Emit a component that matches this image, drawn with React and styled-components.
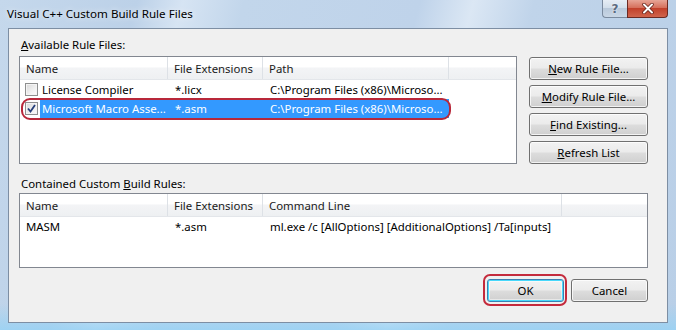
import React from 'react';
import styled, { createGlobalStyle } from 'styled-components';

const GlobalStyle = createGlobalStyle`
  html, body { margin: 0; padding: 0; }
  body {
    width: 676px;
    height: 330px;
    overflow: hidden;
    font-family: "Noto Sans", "DejaVu Sans", sans-serif;
    font-size: 11.4px;
    color: #000;
  }
`;

const rules = [
  { name: 'License Compiler', ext: '*.licx', path: 'C:\\Program Files (x86)\\Microso...', checked: false },
  { name: 'Microsoft Macro Asse...', ext: '*.asm', path: 'C:\\Program Files (x86)\\Microso...', checked: true, selected: true },
];

const sideButtons = [
  { key: 'N', rest: 'ew Rule File...' },
  { key: 'M', rest: 'odify Rule File...' },
  { key: 'F', rest: 'ind Existing...' },
  { key: 'R', rest: 'efresh List' },
];

function CheckBox({ checked }) {
  return (
    <Check>
      {checked && (
        <svg width="11" height="11" viewBox="0 0 11 11">
          <path d="M2 5.5 L4.5 8.5 L9 2" fill="none" stroke="#27407a" strokeWidth="1.8" />
        </svg>
      )}
    </Check>
  );
}

export default function App() {
  return (
    <Window>
      <GlobalStyle />
      <TitleBar>
        <Title>Visual C++ Custom Build Rule Files</Title>
        <Caption>
          <HelpButton>?</HelpButton>
          <CloseButton>
            <svg width="14" height="11" viewBox="0 0 14 11">
              <path d="M3 1.5 L11 9.5 M11 1.5 L3 9.5" stroke="#5a1a12" strokeWidth="3.4" strokeLinecap="round" />
              <path d="M3 1.5 L11 9.5 M11 1.5 L3 9.5" stroke="#fff" strokeWidth="2" strokeLinecap="round" />
            </svg>
          </CloseButton>
        </Caption>
      </TitleBar>

      <Client>
        <GroupLabel $gap={4}><u>A</u>vailable Rule Files:</GroupLabel>
        <TopSection>
          <ListView $height={108} $width={498}>
            <HeaderRow>
              <HeadCell $w={148}>Name</HeadCell>
              <HeadCell $w={95}>File Extensions</HeadCell>
              <HeadCell $w={186}>Path</HeadCell>
              <HeadFill />
            </HeaderRow>
            {rules.map((r) => (
              <Row key={r.name}>
                <NameCell $w={148}>
                  <CheckBox checked={r.checked} />
                  <NameText $selected={r.selected}>{r.name}</NameText>
                </NameCell>
                <Cell $w={95} $selected={r.selected}>{r.ext}</Cell>
                <Cell $w={186} $selected={r.selected}>{r.path}</Cell>
                {r.selected && <RowMark />}
              </Row>
            ))}
          </ListView>
          <ButtonColumn>
            {sideButtons.map((b) => (
              <Button key={b.key}><u>{b.key}</u>{b.rest}</Button>
            ))}
          </ButtonColumn>
        </TopSection>

        <GroupLabel $top={12} $gap={2}>Contained Custom <u>B</u>uild Rules:</GroupLabel>
        <ListView $height={75}>
          <HeaderRow>
            <HeadCell $w={148}>Name</HeadCell>
            <HeadCell $w={95}>File Extensions</HeadCell>
            <HeadCell $w={299}>Command Line</HeadCell>
            <HeadFill />
          </HeaderRow>
          <Row>
            <Cell $w={148} $pad={6}>MASM</Cell>
            <Cell $w={95}>*.asm</Cell>
            <Cell $w={380}>ml.exe /c [AllOptions] [AdditionalOptions] /Ta[inputs]</Cell>
          </Row>
        </ListView>

        <Footer>
          <DefaultButton>
            OK
            <Ring />
          </DefaultButton>
          <Button $w={77}>Cancel</Button>
        </Footer>
      </Client>
    </Window>
  );
}

const Window = styled.div`
  width: 676px;
  height: 330px;
  box-sizing: border-box;
  display: flex;
  flex-direction: column;
  background:
    linear-gradient(to bottom, rgba(255,255,255,0) 0%, rgba(255,255,255,0) 92%, rgba(150,210,245,0.8) 100%),
    linear-gradient(105deg, #c5d8ec 0%, #bcd1e8 18%, #d6e4f3 24%, #c2d6eb 32%, #bfd3ea 55%, #dbe7f4 62%, #c0d4ea 70%, #b9cfe7 100%);
`;

const TitleBar = styled.div`
  height: 28px;
  display: flex;
  align-items: flex-start;
  flex-shrink: 0;
`;

const Title = styled.div`
  padding: 6px 0 0 7px;
  line-height: 16px;
  font-size: 11.6px;
  color: #000;
  text-shadow: 0 0 6px rgba(255,255,255,0.9);
`;

const Caption = styled.div`
  margin-left: auto;
  margin-right: 8px;
  display: flex;
`;

const HelpButton = styled.div`
  width: 25px;
  height: 18px;
  box-sizing: border-box;
  border: 1px solid #7a8a9e;
  border-top: none;
  border-right: none;
  border-bottom-left-radius: 4px;
  background: linear-gradient(to bottom, #e6edf5 0%, #d3dfeb 45%, #b9c9db 50%, #c9d7e6 100%);
  display: flex;
  align-items: center;
  justify-content: center;
  font-family: "DejaVu Sans", sans-serif;
  font-weight: bold;
  font-size: 12px;
  color: #5b6b80;
  text-shadow: 0 0 2px #fff;
`;

const CloseButton = styled.div`
  width: 41px;
  height: 18px;
  box-sizing: border-box;
  border: 1px solid #6b2a22;
  border-top: none;
  border-bottom-right-radius: 4px;
  background: linear-gradient(to bottom, #e7a596 0%, #d6705c 45%, #c2412b 50%, #d0644c 100%);
  display: flex;
  align-items: center;
  justify-content: center;
`;

const Client = styled.div`
  flex: 1;
  margin: 0 8px 7px 8px;
  background: #f0f0f0;
  border: 1px solid #7d8ea3;
  padding: 8px 19px 0 10px;
  display: flex;
  flex-direction: column;
`;

const GroupLabel = styled.div`
  margin: ${(p) => p.$top || 0}px 0 ${(p) => p.$gap || 0}px 2px;
  line-height: 15px;
`;

const TopSection = styled.div`
  display: flex;
  gap: 12px;
  align-items: flex-start;
`;

const ListView = styled.div`
  position: relative;
  flex: none;
  width: ${(p) => (p.$width ? `${p.$width}px` : 'auto')};
  height: ${(p) => p.$height}px;
  box-sizing: border-box;
  border: 1px solid #828790;
  background: #fff;
`;

const HeaderRow = styled.div`
  display: flex;
  height: 23px;
  box-sizing: border-box;
  border-bottom: 1px solid #e3e6ea;
  background: linear-gradient(to bottom, #ffffff 0%, #ffffff 45%, #f3f4f6 50%, #eef0f2 100%);
`;

const HeadCell = styled.div`
  width: ${(p) => p.$w}px;
  box-sizing: border-box;
  padding-left: 6px;
  border-right: 1px solid #dde1e6;
  display: flex;
  align-items: center;
  color: #1b1b1b;
`;

const HeadFill = styled.div`
  flex: 1;
`;

const Row = styled.div`
  position: relative;
  display: flex;
  height: 19px;
`;

const Cell = styled.div`
  width: ${(p) => p.$w}px;
  box-sizing: border-box;
  padding-left: ${(p) => p.$pad || 7}px;
  display: flex;
  align-items: center;
  white-space: nowrap;
  overflow: hidden;
  background: ${(p) => (p.$selected ? '#3399ff' : 'transparent')};
  color: ${(p) => (p.$selected ? '#fff' : '#000')};
`;

const NameCell = styled.div`
  width: ${(p) => p.$w}px;
  display: flex;
  align-items: center;
  padding-left: 5px;
  box-sizing: border-box;
`;

const NameText = styled.div`
  flex: 1;
  height: 100%;
  display: flex;
  align-items: center;
  margin-left: 2px;
  padding-left: 2px;
  white-space: nowrap;
  overflow: hidden;
  background: ${(p) => (p.$selected ? '#3399ff' : 'transparent')};
  color: ${(p) => (p.$selected ? '#fff' : '#000')};
`;

const Check = styled.div`
  width: 13px;
  height: 13px;
  flex: none;
  box-sizing: border-box;
  border: 1px solid #8e8f8f;
  background: linear-gradient(135deg, #d8d8d8 0%, #f1f1f1 60%, #fbfbfb 100%);
  box-shadow: inset 0 0 0 1px #f4f4f4;
  display: flex;
  align-items: center;
  justify-content: center;
`;

const RowMark = styled.div`
  position: absolute;
  left: 1px;
  top: -1px;
  width: 430px;
  height: 22px;
  box-sizing: border-box;
  border: 2px solid #b8283a;
  border-radius: 9px;
  pointer-events: none;
`;

const ButtonColumn = styled.div`
  width: 119px;
  display: flex;
  flex-direction: column;
  gap: 5px;
  padding-top: 1px;
`;

const Button = styled.div`
  position: relative;
  width: ${(p) => (p.$w ? `${p.$w}px` : 'auto')};
  height: 23px;
  box-sizing: border-box;
  border: 1px solid #707070;
  border-radius: 3px;
  background: linear-gradient(to bottom, #f2f2f2 0%, #ebebeb 48%, #dddddd 52%, #cfcfcf 100%);
  box-shadow: inset 0 0 0 1px rgba(255,255,255,0.75);
  display: flex;
  align-items: center;
  justify-content: center;
  color: #000;
  white-space: nowrap;
`;

const DefaultButton = styled(Button)`
  width: 77px;
  border-color: #3c7fb1;
  box-shadow: inset 0 0 0 1px #48d8fb, inset 0 0 0 2px rgba(255,255,255,0.5);
`;

const Ring = styled.div`
  position: absolute;
  top: -6px;
  bottom: -5px;
  left: -5px;
  right: -4px;
  border: 2px solid #c42a3c;
  border-radius: 7px;
  pointer-events: none;
`;

const Footer = styled.div`
  margin-top: 11px;
  display: flex;
  justify-content: flex-end;
  gap: 7px;
`;
